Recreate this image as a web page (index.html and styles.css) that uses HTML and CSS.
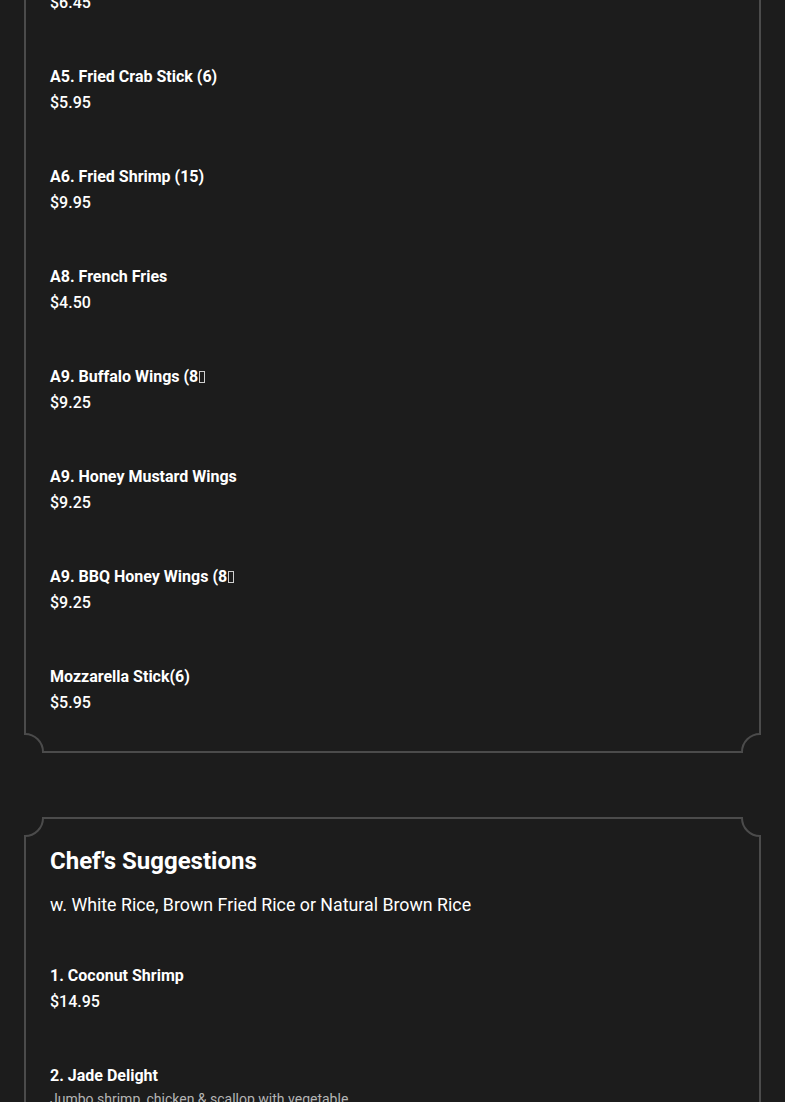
FILE: index.html
```html
<!DOCTYPE html>
<html lang="en">
<head>
<meta charset="utf-8">
<title>Menu</title>
<link rel="stylesheet" href="styles.css">
</head>
<body>
<main class="page">
  <section class="card card-first">
    <span class="corner tl"></span><span class="corner tr"></span><span class="corner bl"></span><span class="corner br"></span>
    <div class="item">
      <div class="item-name">A4. Fried Wonton (10)</div>
      <div class="item-price">$6.45</div>
    </div>
    <div class="item">
      <div class="item-name">A5. Fried Crab Stick (6)</div>
      <div class="item-price">$5.95</div>
    </div>
    <div class="item">
      <div class="item-name">A6. Fried Shrimp (15)</div>
      <div class="item-price">$9.95</div>
    </div>
    <div class="item">
      <div class="item-name">A8. French Fries</div>
      <div class="item-price">$4.50</div>
    </div>
    <div class="item">
      <div class="item-name">A9. Buffalo Wings (8<span class="tofu"></span></div>
      <div class="item-price">$9.25</div>
    </div>
    <div class="item">
      <div class="item-name">A9. Honey Mustard Wings</div>
      <div class="item-price">$9.25</div>
    </div>
    <div class="item">
      <div class="item-name">A9. BBQ Honey Wings (8<span class="tofu"></span></div>
      <div class="item-price">$9.25</div>
    </div>
    <div class="item">
      <div class="item-name">Mozzarella Stick(6)</div>
      <div class="item-price">$5.95</div>
    </div>
  </section>

  <section class="card">
    <span class="corner tl"></span><span class="corner tr"></span><span class="corner bl"></span><span class="corner br"></span>
    <h2 class="card-title">Chef's Suggestions</h2>
    <p class="card-sub">w. White Rice, Brown Fried Rice or Natural Brown Rice</p>
    <div class="item">
      <div class="item-name">1. Coconut Shrimp</div>
      <div class="item-price">$14.95</div>
    </div>
    <div class="item">
      <div class="item-name">2. Jade Delight</div>
      <div class="item-desc">Jumbo shrimp, chicken &amp; scallop with vegetable</div>
      <div class="item-price">$15.95</div>
    </div>
  </section>
</main>
</body>
</html>
```
FILE: styles.css
```css
html, body {
  margin: 0;
  padding: 0;
  background: #1c1c1c;
}
body {
  font-family: Roboto, "Liberation Sans", sans-serif;
  color: #ffffff;
  overflow: hidden;
}
.page {
  padding: 0 24px;
  margin-top: -62px;
}
.card {
  position: relative;
  overflow: hidden;
  padding: 26px 26px 37px;
  margin-bottom: 64px;
}
.card::before {
  content: "";
  position: absolute;
  inset: 0;
  border: 2px solid #4b4b4b;
  pointer-events: none;
}
.corner {
  position: absolute;
  width: 34px;
  height: 34px;
  border: 2px solid #4b4b4b;
  border-radius: 50%;
  background: #1c1c1c;
  z-index: 1;
}
.corner.tl { top: -18px; left: -18px; }
.corner.tr { top: -18px; right: -18px; }
.corner.bl { bottom: -18px; left: -18px; }
.corner.br { bottom: -18px; right: -18px; }

.item {
  margin-bottom: 48px;
}
.item:last-child {
  margin-bottom: 0;
}
.item-name {
  font-size: 16px;
  font-weight: 700;
  line-height: 26px;
}
.item-price {
  font-size: 16px;
  font-weight: 500;
  line-height: 26px;
}
.item-desc {
  font-size: 14px;
  line-height: 20px;
  color: #b5b5b5;
}
.tofu {
  display: inline-block;
  width: 4px;
  height: 10px;
  border: 1px solid #cfcfcf;
  margin-left: 1px;
  vertical-align: -1px;
}
.card-title {
  margin: 0;
  padding-top: 2px;
  font-size: 24px;
  font-weight: 700;
  line-height: 32px;
}
.card-sub {
  margin: 14px 0 44px;
  font-size: 17.8px;
  font-weight: 400;
  line-height: 28px;
}
```
